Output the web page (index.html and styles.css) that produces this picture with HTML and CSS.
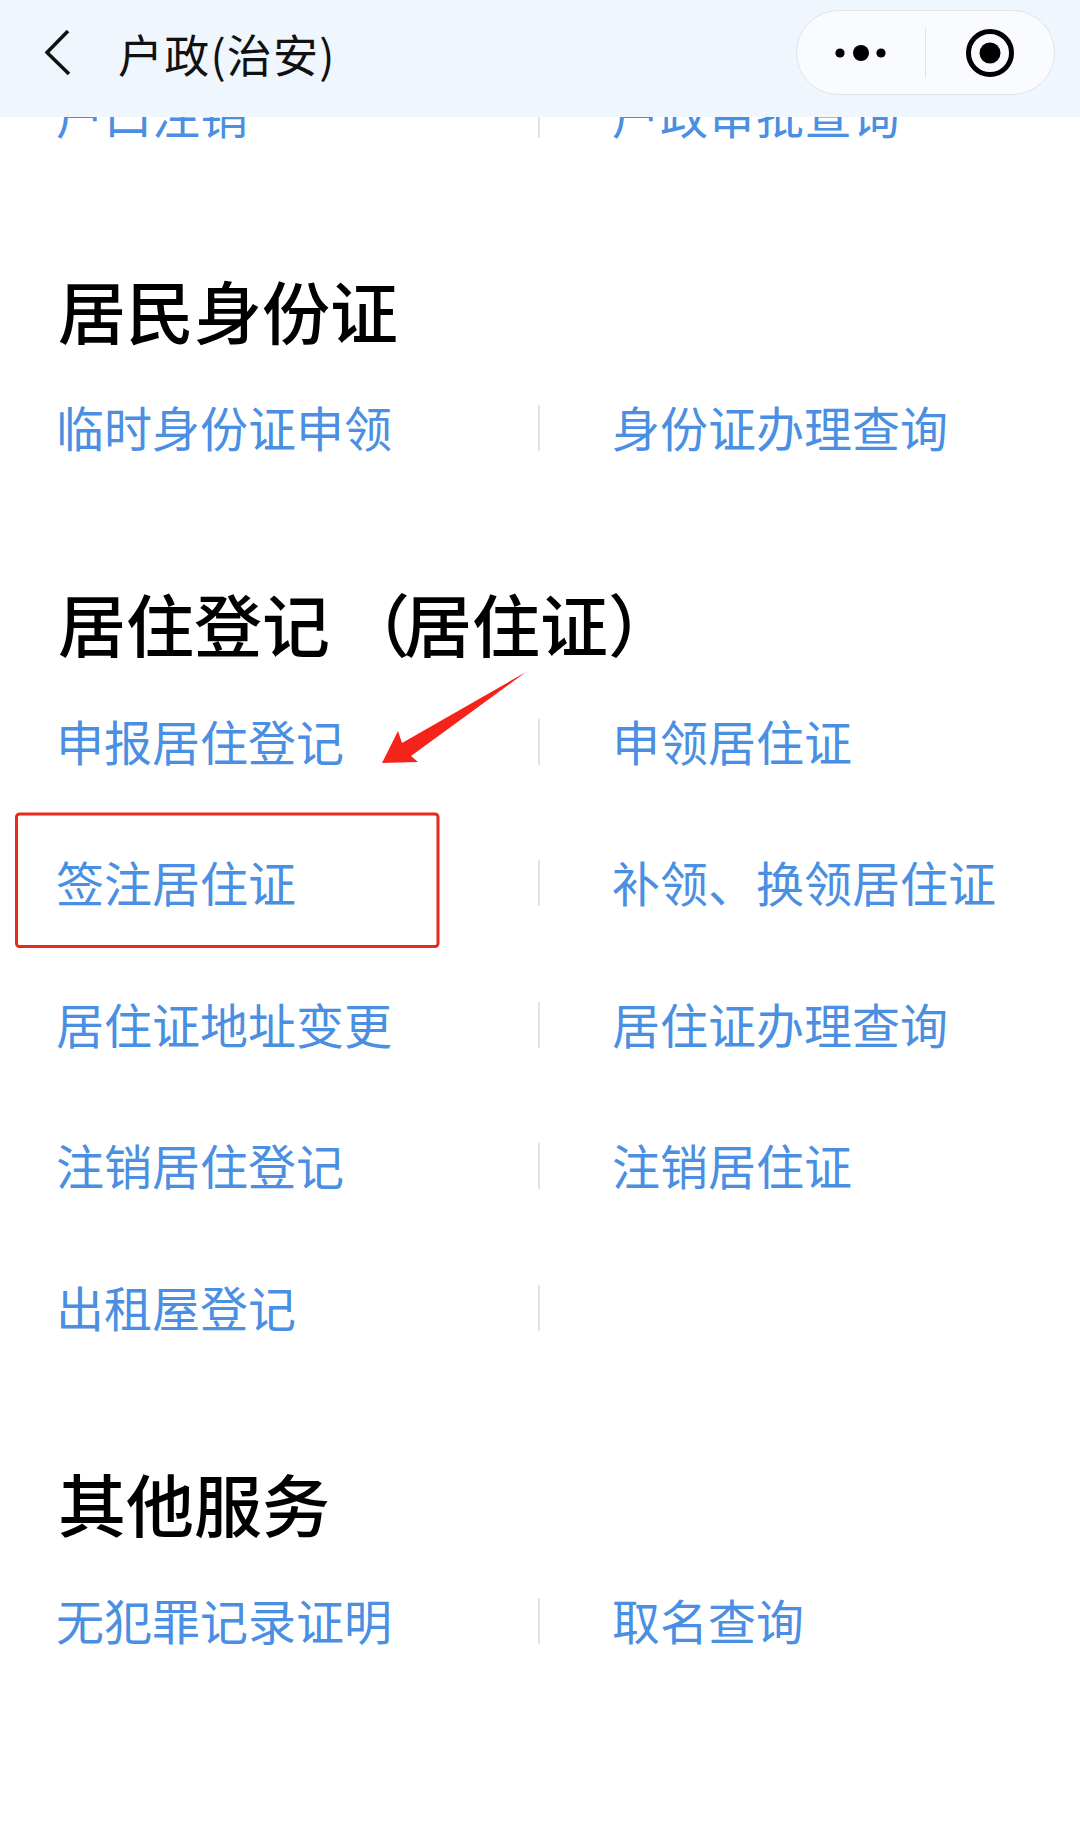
FILE: index.html
```html
<!DOCTYPE html>
<html lang="zh-CN">
<head>
<meta charset="utf-8">
<title>户政(治安)</title>
<link rel="stylesheet" href="styles.css">
</head>
<body>
<header class="navbar">
  <svg class="back" viewBox="0 0 28 50" width="28" height="50" aria-hidden="true">
    <polyline points="23,2 2,23.5 24,45" fill="none" stroke="#111" stroke-width="3.6" stroke-linejoin="miter"/>
  </svg>
  <h1 class="title">户政(治安)</h1>
  <div class="capsule">
    <div class="cap-half">
      <svg viewBox="0 0 52 18" width="52" height="18" aria-hidden="true">
        <circle cx="5" cy="9" r="4.6" fill="#000"/>
        <circle cx="26" cy="9" r="8" fill="#000"/>
        <circle cx="46" cy="9" r="4.6" fill="#000"/>
      </svg>
    </div>
    <span class="cap-divider"></span>
    <div class="cap-half">
      <svg viewBox="0 0 50 50" width="50" height="50" aria-hidden="true">
        <circle cx="25" cy="25" r="21.5" fill="none" stroke="#000" stroke-width="5"/>
        <circle cx="25" cy="25" r="10.5" fill="#000"/>
      </svg>
    </div>
  </div>
</header>

<main class="page">
  <section class="group group-scrolled">
    <div class="row"><div class="cell">户口注销</div><div class="cell cell-right">户政审批查询</div></div>
  </section>

  <section class="group">
    <h2 class="group-title">居民身份证</h2>
    <div class="row"><div class="cell">临时身份证申领</div><div class="cell cell-right">身份证办理查询</div></div>
  </section>

  <section class="group">
    <h2 class="group-title">居住登记<span class="paren-open">（</span>居住证）</h2>
    <div class="row"><div class="cell">申报居住登记</div><div class="cell cell-right">申领居住证</div></div>
    <div class="row"><div class="cell">签注居住证</div><div class="cell cell-right">补领、换领居住证</div></div>
    <div class="row"><div class="cell">居住证地址变更</div><div class="cell cell-right">居住证办理查询</div></div>
    <div class="row"><div class="cell">注销居住登记</div><div class="cell cell-right">注销居住证</div></div>
    <div class="row"><div class="cell">出租屋登记</div><div class="cell cell-right"></div></div>
  </section>

  <section class="group">
    <h2 class="group-title">其他服务</h2>
    <div class="row"><div class="cell">无犯罪记录证明</div><div class="cell cell-right">取名查询</div></div>
  </section>
</main>

<svg class="annotations" viewBox="0 0 1080 1836" width="1080" height="1836" aria-hidden="true">
  <rect x="16.5" y="814" width="421.5" height="132.5" rx="3" fill="none" stroke="#e8291d" stroke-width="3"/>
  <polygon points="526,672 402,743 398,731 382,763 418,762 411,756" fill="#f5241a"/>
</svg>
</body>
</html>
```

FILE: styles.css
```css
* {
  box-sizing: border-box;
}

html, body {
  margin: 0;
  padding: 0;
  background: #ffffff;
}

body {
  position: relative;
  width: 1080px;
  min-height: 1836px;
  overflow: hidden;
  font-family: "Noto Sans CJK SC", "Noto Sans", "Liberation Sans", sans-serif;
  color: #111;
}

/* ---------- navigation bar ---------- */
.navbar {
  position: fixed;
  top: 0;
  left: 0;
  right: 0;
  height: 117px;
  z-index: 10;
  background: #eff6fd;
  display: flex;
  align-items: center;
  padding-left: 45px;
  padding-right: 25px;
}

.back {
  flex: none;
  margin-top: -10px;
}

.title {
  margin: -10px 0 0 45px;
  font-size: 45px;
  font-weight: 400;
  line-height: 60px;
  color: #111;
  letter-spacing: 1.2px;
}

.capsule {
  margin-left: auto;
  align-self: flex-start;
  margin-top: 10px;
  width: 259px;
  height: 85px;
  border: 1.5px solid #e1e4e8;
  border-radius: 43px;
  background: #f9fbfe;
  display: flex;
  align-items: center;
}

.cap-half {
  flex: 1;
  display: flex;
  justify-content: center;
  align-items: center;
}

.cap-half svg {
  display: block;
}

.cap-divider {
  width: 1px;
  height: 51px;
  background: #e0e3e7;
}

/* ---------- content ---------- */
.page {
  padding: 44px 60px 0 56px;
}

.group {
  padding-top: 84px;
}

.group-scrolled {
  padding-top: 0;
}

.group-title {
  margin: 0 0 8px 2px;
  font-size: 68px;
  font-weight: 500;
  line-height: 80px;
  color: #000;
}

.paren-open {
  margin: 0 -6px 0 12px;
}

.row {
  display: grid;
  grid-template-columns: 482px 1fr;
  align-items: center;
  height: 141.5px;
}

.cell {
  font-size: 48px;
  line-height: 60px;
  padding-bottom: 4px;
  color: #4a8fe2;
  white-space: nowrap;
}

.cell-right {
  height: 46px;
  border-left: 2px solid #e2e2e2;
  padding-left: 72px;
  display: flex;
  align-items: center;
}

/* ---------- annotation overlay ---------- */
.annotations {
  position: absolute;
  top: 0;
  left: 0;
  z-index: 5;
  pointer-events: none;
}
```
